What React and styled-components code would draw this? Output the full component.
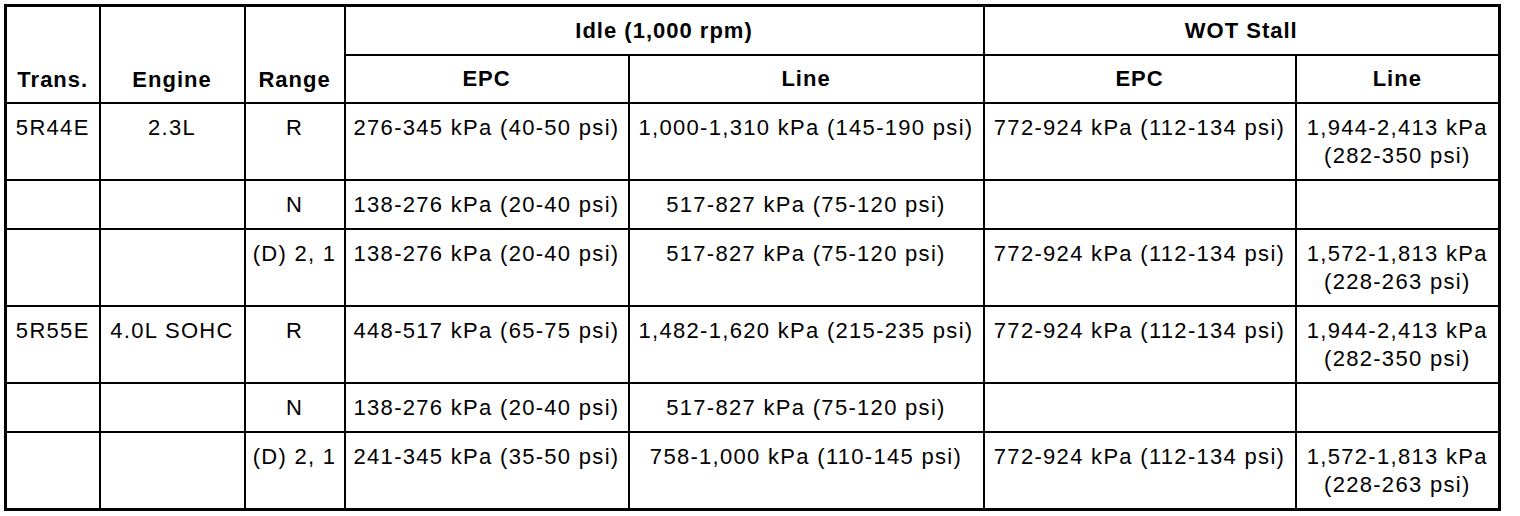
import React from "react";
import styled, { createGlobalStyle } from "styled-components";

const Global = createGlobalStyle`
  html, body { margin: 0; padding: 0; background: #fff; }
  body { padding: 4px; }
`;

const Table = styled.table`
  width: 1494px;
  table-layout: fixed;
  border-collapse: collapse;
  border: 3px solid #000;
  font-family: "Liberation Sans", Arial, sans-serif;
  font-size: 22px;
  color: #000;
`;

const Col = styled.col`
  width: ${(p) => p.$w}px;
`;

const Head = styled.th`
  border: 2px solid #000;
  font-weight: bold;
  letter-spacing: 1px;
  text-align: center;
  vertical-align: ${(p) => (p.$bottom ? "bottom" : "middle")};
  padding: ${(p) => (p.$bottom ? "0 4px 9px" : "0 4px")};
  height: ${(p) => p.$h || "auto"};
  line-height: 26px;
  white-space: nowrap;
`;

const Cell = styled.td`
  border: 2px solid #000;
  text-align: center;
  vertical-align: top;
  padding: 10px 4px 9px;
  line-height: 28px;
  letter-spacing: 1.3px;
  white-space: nowrap;
`;

const Line = styled.div``;

const widths = [94, 145, 100, 284, 355, 312, 204];

const rows = [
  ["5R44E", "2.3L", "R", "276-345 kPa (40-50 psi)", "1,000-1,310 kPa (145-190 psi)", "772-924 kPa (112-134 psi)", ["1,944-2,413 kPa", "(282-350 psi)"]],
  ["", "", "N", "138-276 kPa (20-40 psi)", "517-827 kPa (75-120 psi)", "", []],
  ["", "", "(D) 2, 1", "138-276 kPa (20-40 psi)", "517-827 kPa (75-120 psi)", "772-924 kPa (112-134 psi)", ["1,572-1,813 kPa", "(228-263 psi)"]],
  ["5R55E", "4.0L SOHC", "R", "448-517 kPa (65-75 psi)", "1,482-1,620 kPa (215-235 psi)", "772-924 kPa (112-134 psi)", ["1,944-2,413 kPa", "(282-350 psi)"]],
  ["", "", "N", "138-276 kPa (20-40 psi)", "517-827 kPa (75-120 psi)", "", []],
  ["", "", "(D) 2, 1", "241-345 kPa (35-50 psi)", "758-1,000 kPa (110-145 psi)", "772-924 kPa (112-134 psi)", ["1,572-1,813 kPa", "(228-263 psi)"]],
];

export default function App() {
  return (
    <>
      <Global />
      <Table>
        <colgroup>
          {widths.map((w, i) => (
            <Col key={i} $w={w} />
          ))}
        </colgroup>
        <thead>
          <tr>
            <Head rowSpan={2} $bottom>Trans.</Head>
            <Head rowSpan={2} $bottom>Engine</Head>
            <Head rowSpan={2} $bottom>Range</Head>
            <Head colSpan={2} $h="47px">Idle (1,000 rpm)</Head>
            <Head colSpan={2} $h="47px">WOT Stall</Head>
          </tr>
          <tr>
            <Head $h="46px">EPC</Head>
            <Head $h="46px">Line</Head>
            <Head $h="46px">EPC</Head>
            <Head $h="46px">Line</Head>
          </tr>
        </thead>
        <tbody>
          {rows.map((r, i) => (
            <tr key={i}>
              {r.slice(0, 6).map((c, j) => (
                <Cell key={j}>{c}</Cell>
              ))}
              <Cell>
                {r[6].map((l, k) => (
                  <Line key={k}>{l}</Line>
                ))}
              </Cell>
            </tr>
          ))}
        </tbody>
      </Table>
    </>
  );
}
